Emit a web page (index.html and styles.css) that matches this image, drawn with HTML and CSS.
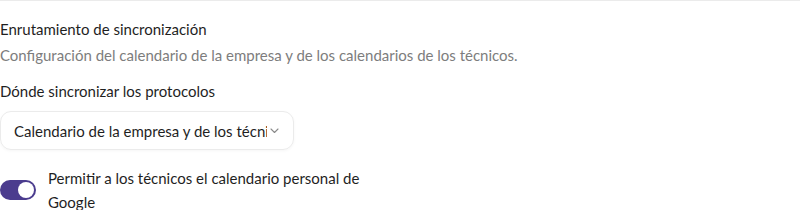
FILE: index.html
```html
<!DOCTYPE html>
<html lang="es">
<head>
    <meta charset="UTF-8">
    <meta name="viewport" content="width=device-width, initial-scale=1.0">
    <title>Enrutamiento de sincronización</title>
    <link rel="stylesheet" href="styles.css">
</head>
<body>
    <section class="sync-settings">
        <!-- Header -->
        <div class="section-head">
            <h2>Enrutamiento de sincronización</h2>
            <p class="section-desc">Configuración del calendario de la empresa y de los calendarios de los técnicos.</p>
        </div>

        <!-- Where to sync -->
        <div class="field">
            <label for="sync-target">Dónde sincronizar los protocolos</label>
            <div class="select-box" id="sync-target">
                <span class="select-value">Calendario de la empresa y de los técnicos</span>
                <svg class="chevron" width="9" height="6" viewBox="0 0 9 6" aria-hidden="true">
                    <path d="M1 1l3.5 3.5L8 1" fill="none" stroke="#8a8a8a" stroke-width="1.1" stroke-linecap="round" stroke-linejoin="round"/>
                </svg>
            </div>
        </div>

        <!-- Personal calendar toggle -->
        <div class="toggle-row">
            <span class="toggle is-on" role="switch" aria-checked="true"><span class="knob"></span></span>
            <span class="toggle-label">Permitir a los técnicos el calendario personal de Google</span>
        </div>
    </section>
</body>
</html>
```

FILE: styles.css
```css
:root {
    --text-color: #1f1f1f;
    --muted-color: #7d7d7d;
    --border-color: #ebebeb;
    --accent-color: #4b3c8e;
}

* {
    margin: 0;
    padding: 0;
    box-sizing: border-box;
}

body {
    font-family: 'Lato', 'Noto Sans', sans-serif;
    font-size: 15px;
    color: var(--text-color);
    background: #fff;
}

.sync-settings {
    border-top: 1px solid var(--border-color);
    padding-top: 18px;
}

h2 {
    font-size: 15px;
    font-weight: 400;
    line-height: 20px;
}

.section-desc {
    margin-top: 6px;
    line-height: 20px;
    color: var(--muted-color);
}

.field {
    margin-top: 16px;
}

label {
    display: block;
    line-height: 20px;
}

.select-box {
    margin-top: 10px;
    width: 294px;
    height: 39px;
    padding: 0 14px 0 13px;
    display: flex;
    align-items: center;
    gap: 3px;
    border: 1px solid var(--border-color);
    border-radius: 11px;
    box-shadow: 0 1px 3px rgba(0, 0, 0, 0.04);
}

.select-value {
    flex: 1;
    min-width: 0;
    line-height: 20px;
    overflow: hidden;
    white-space: nowrap;
}

.chevron {
    flex-shrink: 0;
}

.toggle-row {
    margin-top: 16px;
    display: flex;
    align-items: center;
    gap: 12px;
}

.toggle {
    width: 36px;
    height: 20px;
    flex-shrink: 0;
    border-radius: 10px;
    background: var(--accent-color);
    padding: 2px;
    display: flex;
    justify-content: flex-end;
}

.knob {
    width: 16px;
    height: 16px;
    border-radius: 50%;
    background: #fff;
}

.toggle-label {
    max-width: 320px;
    line-height: 24px;
}
```
